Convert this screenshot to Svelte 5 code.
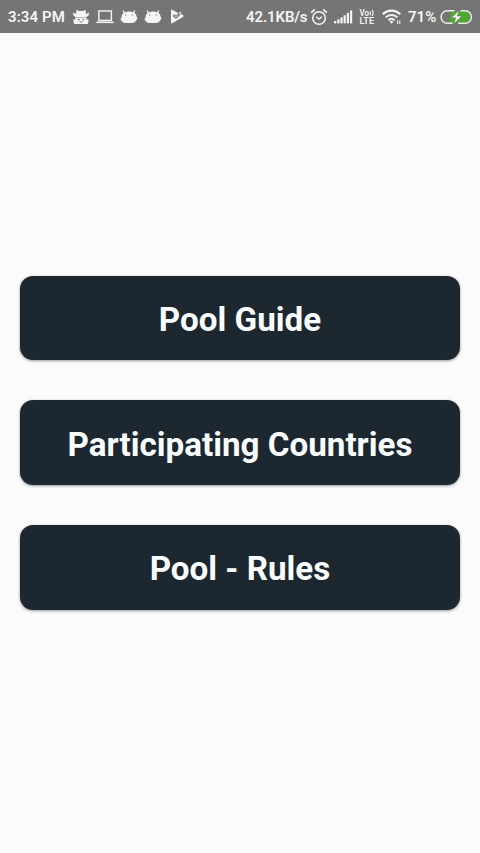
<script lang="ts">
  const menu = ['Pool Guide', 'Participating Countries', 'Pool - Rules'];
</script>

{#snippet droid()}
  <svg class="droid" width="18" height="14" viewBox="0 0 18 14">
    <path d="M3 0.6 4.800 3.600M14.800 0.6 13.400 3.600" stroke="currentColor" stroke-width="1.300" />
    <path
      fill="currentColor"
      fill-rule="evenodd"
      d="M5 2.300C7.400 1.300 10.600 1.300 13 2.300c2.400.8 3.700 2.600 3.700 4.800 1 .7.900 2.700-.4 3-.8 1.800-2.200 2.900-4.200 2.900H6c-2 0-3.600-.8-4.400-2.300C.2 10.400.2 8.500 1.400 7.700 1.500 5 2.800 3.300 5 2.300ZM5.600 4.600a.6.6 0 1 0 0 1.200.6.6 0 0 0 0-1.200Zm6.600 0a.6.6 0 1 0 0 1.200.6.6 0 0 0 0-1.200Z"
    />
  </svg>
{/snippet}

<div class="screen">
  <header class="status">
    <div class="side">
      <span class="time">3:34 PM</span>

      <svg class="agent" width="18" height="16" viewBox="0 0 18 16">
        <path
          fill="currentColor"
          d="M4.500 1 7.200 1.900h3.600L13.500 1l.6 4.200 2.700-1.900v2.900L14.500 8h-11L1.200 6.200V3.300l2.700 1.900Z"
        />
        <path
          fill="currentColor"
          fill-rule="evenodd"
          d="M3.400 8.600h11.200v1.700l2.100.4-.8 4.300H2.100l-.8-4.300 2.100-.4ZM5.800 9.900v1.300h1.700V9.900Zm4.700 0v1.300h1.700V9.900ZM6.800 12.600c1.200 1.200 3.200 1.200 4.400 0Z"
        />
      </svg>

      <svg class="laptop" width="18" height="14" viewBox="0 0 18 14">
        <rect x="2.800" y="1" width="12.600" height="9.400" fill="none" stroke="currentColor" stroke-width="1.400" />
        <path d="M.4 12.300h17.200" stroke="currentColor" stroke-width="1.600" />
      </svg>

      {@render droid()}
      {@render droid()}

      <svg class="play" width="14" height="15" viewBox="0 0 14 15">
        <path fill="currentColor" d="M1 1.200C1 .6 1.500.4 2 .7L8.300 4 6 6.600 4.300 5.100 2.600 6.900 6 10.100 11.200 4.700l2 1.600c.6.500.5 1.200-.1 1.600L2.200 14.200c-.7.4-1.200.1-1.200-.6Z" />
        <path d="M9.300 4.900 10.800 3" stroke="currentColor" stroke-width="1.300" />
        <path d="m4.200 6.400 1.800 1.700 2.300-2.500" fill="none" stroke="currentColor" stroke-width="0.700" />
      </svg>
    </div>

    <div class="side">
      <span class="speed">42.1KB/s</span>

      <svg class="alarm" width="18" height="18" viewBox="0 0 18 18" fill="none" stroke="currentColor">
        <circle cx="9" cy="10" r="6.300" stroke-width="1.500" />
        <path d="M1.200 4.600 4.700 1.500M16.800 4.600l-3.500-3.100" stroke-width="1.700" />
        <path d="m6.200 8.800 2.700 2.300 3-2.300" stroke-width="1.400" />
      </svg>

      <svg class="signal" width="19" height="14" viewBox="0 0 19 14" fill="currentColor">
        <rect x="0" y="11" width="2.200" height="2.400" />
        <rect x="3.200" y="9.400" width="2.200" height="4" />
        <rect x="6.400" y="7.400" width="2.200" height="6" />
        <rect x="9.600" y="5.200" width="2.200" height="8.200" />
        <rect x="12.800" y="2.800" width="2.200" height="10.600" />
        <rect x="16" y="0.500" width="2.200" height="12.900" />
      </svg>

      <svg class="volte" width="16" height="18" viewBox="0 0 16 18" fill="currentColor">
        <text x="0.500" y="7.800" textLength="9.500" lengthAdjust="spacingAndGlyphs">Vo</text>
        <path
          d="M11 3.200q1 2 0 4M13.300 2q1.700 3 0 6"
          fill="none"
          stroke="currentColor"
          stroke-width="1.200"
        />
        <text x="0.500" y="16.300" textLength="14.500" lengthAdjust="spacingAndGlyphs">LTE</text>
      </svg>

      <svg class="wifi" width="20" height="16" viewBox="0 0 20 16" fill="none" stroke="currentColor">
        <path d="M.8 5.300C5.700.3 13.300.3 18.200 5.300" stroke-width="2.200" />
        <path d="M3.600 8.400c3.400-3.300 8.400-3.300 11.800 0" stroke-width="2" />
        <path d="M6.400 11.200c1.900-1.700 4.300-1.700 6.200 0" stroke-width="2" />
        <path d="m7.500 12.500 2 2.300 2-2.300q-2-1.500-4 0Z" fill="currentColor" stroke="none" />
        <path d="M15.600 11.500v3.500M17.800 11.500v3.500" stroke-width="1.100" />
      </svg>

      <span class="percent">71%</span>

      <svg class="battery" width="33" height="16" viewBox="0 0 33 16">
        <path d="M11 2.600h13.500a5.400 5.400 0 0 1 0 10.800H9Z" fill="#4ca82e" />
        <path
          d="M14.500 1.700H7.400a6.300 6.300 0 0 0 0 12.600h5.400M20.500 1.700h4.600a6.300 6.300 0 0 1 0 12.600h-7"
          fill="none"
          stroke="#e6eee2"
          stroke-width="1.500"
        />
        <path
          d="M19.300 1.200 11.500 8.800h4.300l-1.900 6 7.700-7.700h-4.400Z"
          fill="#fff"
          stroke="#60705a"
          stroke-width="0.500"
        />
      </svg>
    </div>
  </header>

  <main class="menu">
    {#each menu as label}
      <button type="button" class="item">{label}</button>
    {/each}
  </main>
</div>

<style>
  :global(body) {
    background: #fbfbfb;
  }

  .screen {
    height: 100vh;
    display: flex;
    flex-direction: column;
    background: #fbfbfb;
    font-family: Roboto, 'Liberation Sans', sans-serif;
    overflow: hidden;
  }

  .status {
    flex: none;
    display: flex;
    justify-content: space-between;
    box-sizing: border-box;
    height: 33px;
    padding: 0 7px 0 8px;
    background: #757575;
    color: #f4f4f4;
    font-size: 15px;
    font-weight: 600;
    line-height: 34px;
    white-space: nowrap;
  }

  .side {
    display: flex;
    align-items: center;
  }

  .side svg {
    flex: none;
    display: block;
  }

  .time {
    width: 64px;
    letter-spacing: 0.08px;
  }

  .agent {
    margin-right: 6px;
  }

  .laptop {
    margin-right: 6px;
  }

  .droid {
    margin-right: 6px;
  }

  .play {
    margin-left: 2px;
  }

  .speed {
    width: 64px;
    letter-spacing: -0.12px;
  }

  .alarm {
    margin-right: 6px;
  }

  .signal {
    margin-right: 6px;
  }

  .volte {
    margin-right: 7px;
  }

  .volte text {
    font-size: 8.4px;
    font-weight: 600;
  }

  .wifi {
    margin-right: 6px;
  }

  .percent {
    width: 32px;
  }

  .menu {
    flex: 1;
    display: flex;
    flex-direction: column;
    justify-content: center;
    gap: 40.2px;
    padding: 0 20px 0.6px;
  }

  .item {
    height: 84.5px;
    padding: 3px 0 0;
    border: 0;
    border-radius: 13px;
    background: #1d2730;
    box-shadow: 0 1px 3px rgba(0, 0, 0, 0.4);
    color: #fafdff;
    font-family: inherit;
    font-size: 33.2px;
    font-weight: 700;
    cursor: pointer;
  }
</style>
